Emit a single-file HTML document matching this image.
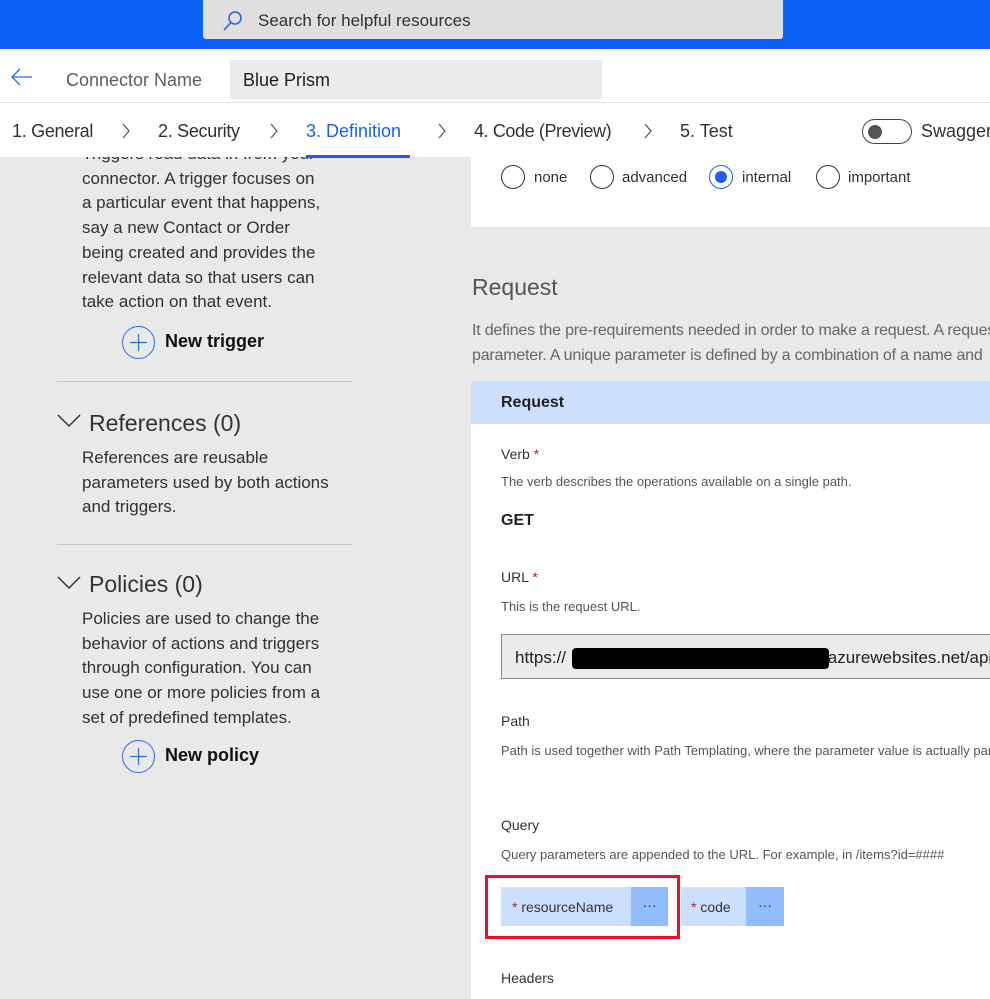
<!DOCTYPE html>
<html><head><meta charset="utf-8"><style>
*{margin:0;padding:0;box-sizing:border-box}
html,body{width:990px;height:999px;overflow:hidden}
body{position:relative;background:#e9e9e9;font-family:"Liberation Sans",sans-serif;color:#323130}
.a{position:absolute;white-space:nowrap}
.t{z-index:3}
.lt{font-size:17px;color:#323130;line-height:24.7px}
.rad{position:absolute;width:24px;height:24px;border:1.5px solid #333;border-radius:50%;background:#fff}
.small{font-size:13px;color:#555}
.lbl{font-size:14px;color:#323130}
.req{color:#a4262c}
.plus{position:absolute;width:33px;height:33px;border:1.3px solid #2b6be8;border-radius:50%}
</style></head><body>
<div class="a" style="left:0;top:0;width:990px;height:999px;overflow:hidden">
<!-- left panel text (under header) -->
<div class="a lt" style="left:82px;top:142px">Triggers read data in from your<br>connector. A trigger focuses on<br>a particular event that happens,<br>say a new Contact or Order<br>being created and provides the<br>relevant data so that users can<br>take action on that event.</div>

<div class="a t" style="left:0;top:0;width:990px;height:49px;background:#0b62f7"></div>
<div class="a t" style="left:203px;top:0;width:580px;height:39px;background:#e1dfdd;border-radius:0 0 3px 3px"></div>
<svg class="a t" style="left:222px;top:10px" width="22" height="22" viewBox="0 0 22 22"><circle cx="13" cy="8" r="6" fill="none" stroke="#2b5cd6" stroke-width="1.5"/><line x1="9" y1="12.5" x2="2" y2="20" stroke="#2b5cd6" stroke-width="1.5"/></svg>
<div class="a t" style="left:258px;top:11px;font-size:17px;color:#323130">Search for helpful resources</div>
<div class="a t" style="left:0;top:49px;width:990px;height:108px;background:#fff"></div>
<div class="a t" style="left:0;top:102px;width:990px;height:1px;background:#e1e1e1"></div>
<svg class="a t" style="left:10px;top:68px" width="24" height="18"><path d="M2 9H22M10 1L2 9L10 17" fill="none" stroke="#2b6be8" stroke-width="1.3"/></svg>
<div class="a t" style="left:66px;top:70px;font-size:18px;color:#605e5c">Connector Name</div>
<div class="a t" style="left:230px;top:60px;width:372px;height:39px;background:#ebebeb"></div>
<div class="a t" style="left:243px;top:70px;font-size:18px;color:#201f1e">Blue Prism</div>
<div class="a t" style="left:12px;top:121px;font-size:18px;color:#323130;letter-spacing:-0.3px">1. General</div>
<svg class="a t" style="left:121px;top:123px" width="10" height="16"><path d="M2 1L8 8L2 15" fill="none" stroke="#555" stroke-width="1.2"/></svg>
<div class="a t" style="left:158px;top:121px;font-size:18px;letter-spacing:-0.3px">2. Security</div>
<svg class="a t" style="left:269px;top:123px" width="10" height="16"><path d="M2 1L8 8L2 15" fill="none" stroke="#555" stroke-width="1.2"/></svg>
<div class="a t" style="left:306px;top:121px;font-size:18px;color:#1a5ff0">3. Definition</div>
<div class="a t" style="left:306px;top:155px;width:104px;height:3px;background:#1a5ff0"></div>
<svg class="a t" style="left:437px;top:123px" width="10" height="16"><path d="M2 1L8 8L2 15" fill="none" stroke="#555" stroke-width="1.2"/></svg>
<div class="a t" style="left:474px;top:121px;font-size:18px;letter-spacing:-0.4px">4. Code (Preview)</div>
<svg class="a t" style="left:643px;top:123px" width="10" height="16"><path d="M2 1L8 8L2 15" fill="none" stroke="#555" stroke-width="1.2"/></svg>
<div class="a t" style="left:680px;top:121px;font-size:18px">5. Test</div>
<div class="a t" style="left:862px;top:119px;width:50px;height:25px;border:1.5px solid #444;border-radius:13px;background:#fff"></div>
<div class="a t" style="left:868px;top:125px;width:14px;height:14px;border-radius:50%;background:#555"></div>
<div class="a t" style="left:921px;top:121px;font-size:18px">Swagger</div>

<div class="plus" style="left:122px;top:326px"></div>
<svg class="a" style="left:122px;top:326px" width="33" height="33"><path d="M16.5 8V25M8 16.5H25" stroke="#2b6be8" stroke-width="1.2"/></svg>
<div class="a" style="left:165px;top:331px;font-size:18px;font-weight:bold;color:#111">New trigger</div>
<div class="a" style="left:57px;top:381px;width:295px;height:1px;background:#c4c4c4"></div>
<svg class="a" style="left:57px;top:413px" width="26" height="16"><path d="M1 2L12 13L23 2" fill="none" stroke="#333" stroke-width="1.5"/></svg>
<div class="a" style="left:89px;top:410px;font-size:23px;color:#333">References (0)</div>
<div class="a lt" style="left:82px;top:446px">References are reusable<br>parameters used by both actions<br>and triggers.</div>
<div class="a" style="left:57px;top:544px;width:295px;height:1px;background:#c4c4c4"></div>
<svg class="a" style="left:57px;top:575px" width="26" height="16"><path d="M1 2L12 13L23 2" fill="none" stroke="#333" stroke-width="1.5"/></svg>
<div class="a" style="left:89px;top:571px;font-size:23px;color:#333">Policies (0)</div>
<div class="a lt" style="left:82px;top:607px">Policies are used to change the<br>behavior of actions and triggers<br>through configuration. You can<br>use one or more policies from a<br>set of predefined templates.</div>
<div class="plus" style="left:122px;top:740px"></div>
<svg class="a" style="left:122px;top:740px" width="33" height="33"><path d="M16.5 8V25M8 16.5H25" stroke="#2b6be8" stroke-width="1.2"/></svg>
<div class="a" style="left:165px;top:745px;font-size:18px;font-weight:bold;color:#111">New policy</div>

<!-- right -->
<div class="a" style="left:471px;top:157px;width:519px;height:70px;background:#fff"></div>
<div class="rad" style="left:501px;top:165px"></div><div class="a" style="left:534px;top:169px;font-size:15px">none</div>
<div class="rad" style="left:590px;top:165px"></div><div class="a" style="left:622px;top:169px;font-size:15px">advanced</div>
<div class="rad" style="left:709px;top:165px;border-color:#1a5ff0"></div><div class="a" style="left:715px;top:171px;width:12px;height:12px;border-radius:50%;background:#1a5ff0"></div><div class="a" style="left:742px;top:169px;font-size:15px">internal</div>
<div class="rad" style="left:816px;top:165px"></div><div class="a" style="left:848px;top:169px;font-size:15px">important</div>
<div class="a" style="left:472px;top:274px;font-size:23px;color:#555;font-weight:300">Request</div>
<div class="a" style="left:472px;top:318px;font-size:16px;color:#666;line-height:25px;letter-spacing:-0.2px">It defines the pre-requirements needed in order to make a request. A request<br>parameter. A unique parameter is defined by a combination of a name and</div>
<div class="a" style="left:471px;top:381px;width:519px;height:43px;background:#cce0fd"></div>
<div class="a" style="left:501px;top:394px;font-size:16px;font-weight:bold;color:#222">Request</div>
<div class="a" style="left:471px;top:424px;width:519px;height:575px;background:#fff"></div>
<div class="a lbl" style="left:501px;top:446px">Verb <span class="req">*</span></div>
<div class="a small" style="left:501px;top:474px">The verb describes the operations available on a single path.</div>
<div class="a" style="left:501px;top:512px;font-size:16px;font-weight:bold;color:#222">GET</div>
<div class="a lbl" style="left:501px;top:569px">URL <span class="req">*</span></div>
<div class="a small" style="left:501px;top:599px">This is the request URL.</div>
<div class="a" style="left:501px;top:634px;width:500px;height:45px;background:#ebebeb;border:1px solid #888"></div>
<div class="a" style="left:515px;top:648px;font-size:17px;color:#222">https://<span style="display:inline-block;width:257px;height:0"></span>.azurewebsites.net/api/</div>
<div class="a" style="left:572px;top:648px;width:257px;height:21px;background:#000;border-radius:4px"></div>
<div class="a lbl" style="left:501px;top:713px">Path</div>
<div class="a small" style="left:501px;top:743px">Path is used together with Path Templating, where the parameter value is actually part</div>
<div class="a lbl" style="left:501px;top:817px">Query</div>
<div class="a small" style="left:501px;top:847px">Query parameters are appended to the URL. For example, in /items?id=####</div>
<div class="a" style="left:485px;top:875px;width:195px;height:64px;border:3.5px solid #e81123"></div>
<div class="a" style="left:501px;top:887px;width:130px;height:39px;background:#cce0fd"></div>
<div class="a" style="left:631px;top:887px;width:37px;height:39px;background:#91bdfc;text-align:center;font-size:14px;line-height:36px;color:#333">···</div>
<div class="a" style="left:512px;top:899px;font-size:14px;color:#333"><span class="req">*</span> resourceName</div>
<div class="a" style="left:681px;top:887px;width:66px;height:39px;background:#cce0fd"></div>
<div class="a" style="left:746px;top:887px;width:38px;height:39px;background:#91bdfc;text-align:center;font-size:14px;line-height:36px;color:#333">···</div>
<div class="a" style="left:691px;top:899px;font-size:14px;color:#333"><span class="req">*</span> code</div>
<div class="a lbl" style="left:501px;top:970px">Headers</div>
</div>
</body></html>
